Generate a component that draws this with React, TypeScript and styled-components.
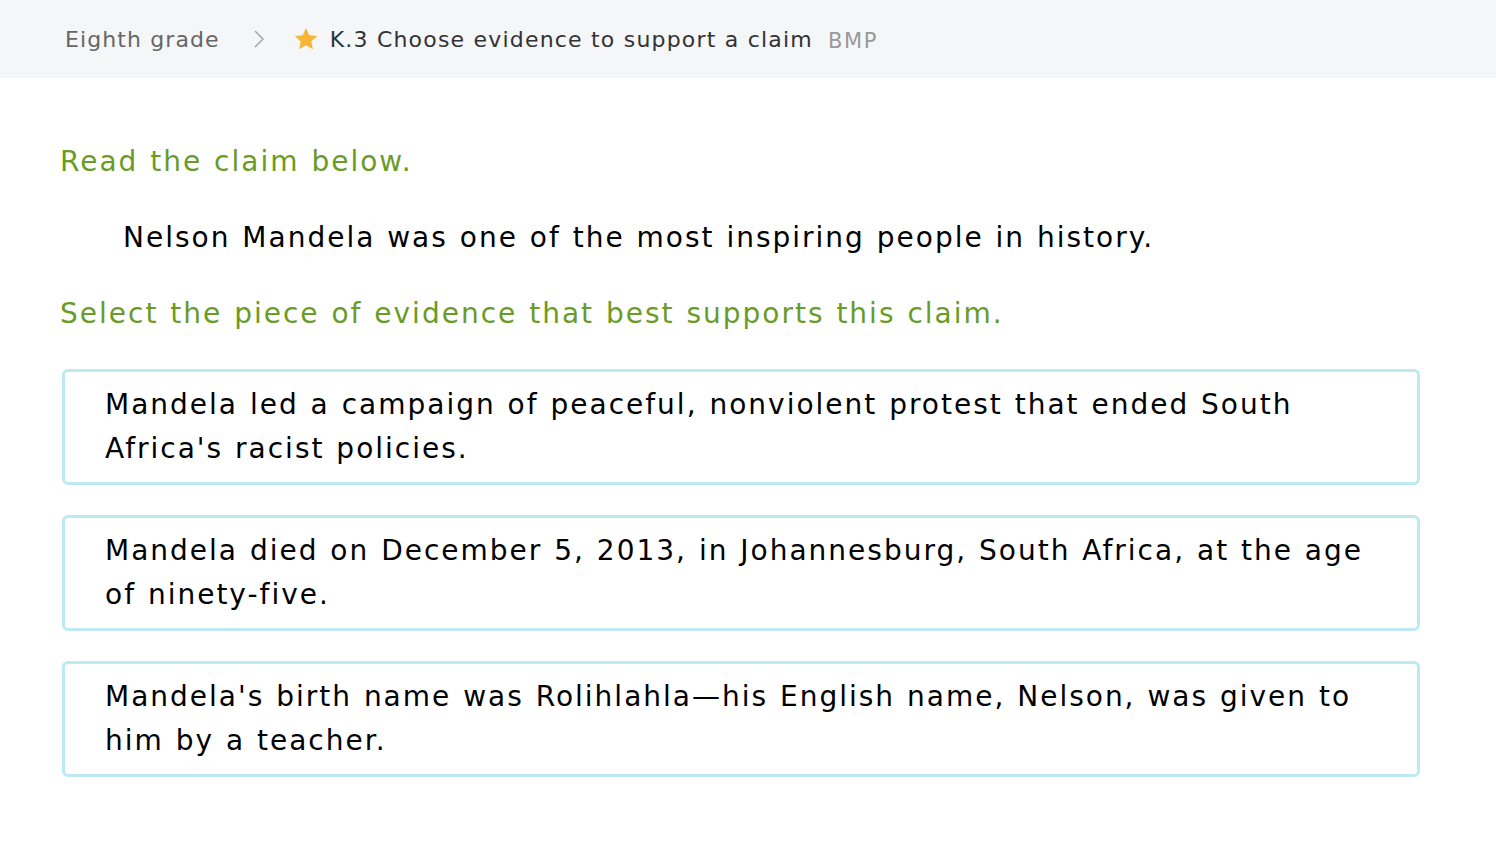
import React from "react";
import styled, { createGlobalStyle } from "styled-components";

const Global = createGlobalStyle`
  html, body { margin: 0; padding: 0; background: #fff; }
  body { font-family: "DejaVu Sans", Verdana, sans-serif; }
`;

const Header = styled.header`
  height: 78px;
  background: #f4f6f8;
  display: flex;
  align-items: center;
  padding-left: 65px;
  box-sizing: border-box;
`;

const Crumb = styled.span`
  font-size: 22px;
  letter-spacing: 1.1px;
  color: #666;
`;

const Chevron = styled.span`
  display: inline-flex;
  margin: 0 27px 0 33px;
`;

const Skill = styled.span`
  display: inline-flex;
  align-items: center;
  gap: 10px;
  font-size: 22px;
  letter-spacing: 1.2px;
  color: #333;
`;

const Code = styled.span`
  font-size: 21px;
  letter-spacing: 1.6px;
  color: #999;
  margin-left: 15px;
  margin-top: 3px;
`;

const Main = styled.main`
  padding: 62px 76px 0 60px;
`;

const BodyText = styled.div`
  font-size: 28px;
  line-height: 44px;
  letter-spacing: 2px;
  word-spacing: 1px;
`;

const Prompt = styled(BodyText)`
  color: #6a9b26;
`;

const Claim = styled(BodyText)`
  color: #000;
  padding-left: 63px;
  margin: 32px 0 32px;
`;

const Choices = styled.div`
  display: flex;
  flex-direction: column;
  gap: 30px;
  margin-top: 33px;
  padding-left: 2px;
`;

const Choice = styled(BodyText)`
  border: 3px solid #bce9f2;
  border-radius: 6px;
  padding: 11px 40px;
  color: #000;
  background: #fff;
`;

const Star = () => (
  <svg width="28" height="26" viewBox="0 0 24 24">
    <path
      d="M12 1.8l3.05 6.7 7.3.8-5.45 4.95 1.5 7.2L12 17.8l-6.4 3.65 1.5-7.2L1.65 9.3l7.3-.8z"
      fill="#f8b637"
    />
  </svg>
);

const ChevronIcon = () => (
  <svg width="12" height="22" viewBox="0 0 12 22">
    <path d="M2 3l8 8-8 8" fill="none" stroke="#aaa" strokeWidth="1.6" />
  </svg>
);

const choices = [
  "Mandela led a campaign of peaceful, nonviolent protest that ended South Africa's racist policies.",
  "Mandela died on December 5, 2013, in Johannesburg, South Africa, at the age of ninety-five.",
  "Mandela's birth name was Rolihlahla\u2014his English name, Nelson, was given to him by a teacher.",
];

export default function App() {
  return (
    <>
      <Global />
      <Header>
        <Crumb>Eighth grade</Crumb>
        <Chevron>
          <ChevronIcon />
        </Chevron>
        <Skill>
          <Star />
          K.3 Choose evidence to support a claim
        </Skill>
        <Code>BMP</Code>
      </Header>
      <Main>
        <Prompt>Read the claim below.</Prompt>
        <Claim>Nelson Mandela was one of the most inspiring people in history.</Claim>
        <Prompt>Select the piece of evidence that best supports this claim.</Prompt>
        <Choices>
          {choices.map((c) => (
            <Choice key={c}>{c}</Choice>
          ))}
        </Choices>
      </Main>
    </>
  );
}
